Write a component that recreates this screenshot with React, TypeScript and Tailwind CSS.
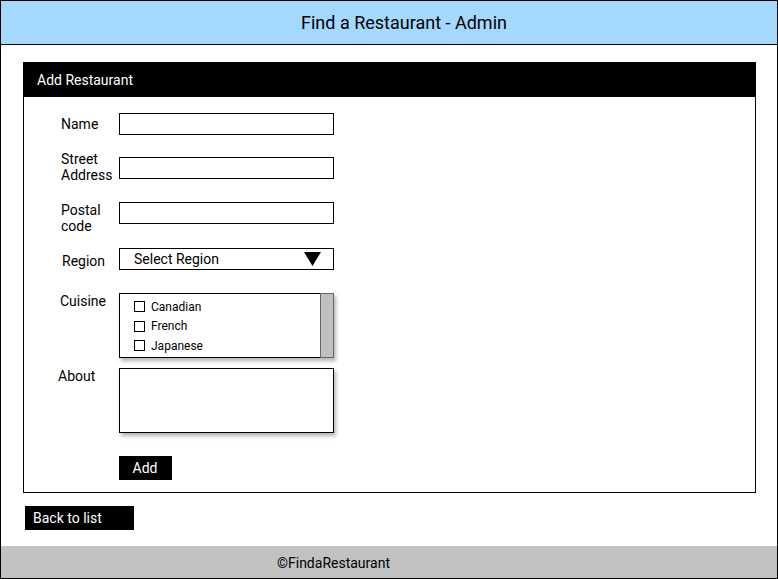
import React from "react";

function Label({ children, className = "" }: { children: React.ReactNode; className?: string }) {
  return <div className={"w-[58px] shrink-0 text-[14px] leading-[16px] text-black " + className}>{children}</div>;
}

export default function App() {
  const cuisines = ["Canadian", "French", "Japanese"];
  return (
    <div
      className="w-[778px] h-[579px] border border-black flex flex-col bg-white overflow-hidden"
      style={{ fontFamily: "Roboto, 'Liberation Sans', sans-serif" }}
    >
      <div className="h-[44px] shrink-0 bg-[#a4d8fd] border-b border-black flex items-center justify-center">
        <span className="text-[18px] leading-[22px] text-black pl-[30px]">Find a Restaurant - Admin</span>
      </div>

      <div className="mt-[17px] ml-[22px] w-[733px] h-[431px] border border-black flex flex-col">
        <div className="h-[34px] bg-black flex items-center pl-[13px]">
          <span className="text-white text-[14px] leading-[16px]">Add Restaurant</span>
        </div>
        <div className="flex flex-col pl-[37px] pt-[16px]">
          {/* Name */}
          <div className="flex items-start">
            <Label className="mt-[3px]">Name</Label>
            <div className="w-[215px] h-[22px] border border-black" />
          </div>
          {/* Street */}
          <div className="flex items-start mt-[16px]">
            <Label>
              Street
              <br />
              Address
            </Label>
            <div className="w-[215px] h-[22px] border border-black mt-[6px]" />
          </div>
          {/* Postal */}
          <div className="flex items-start mt-[19px]">
            <Label>
              Postal
              <br />
              code
            </Label>
            <div className="w-[215px] h-[22px] border border-black" />
          </div>
          {/* Region */}
          <div className="flex items-start mt-[14px]">
            <Label className="mt-[5px] pl-[1px]">Region</Label>
            <div className="w-[215px] h-[22px] border border-black flex items-center pl-[14px] pr-[12px] justify-between">
              <span className="text-[14px] leading-[16px]">Select Region</span>
              <svg width="17" height="14" viewBox="0 0 17 14">
                <polygon points="0,0 17,0 8.5,14" fill="black" />
              </svg>
            </div>
          </div>
          {/* Cuisine */}
          <div className="flex items-start mt-[23px]">
            <Label className="-ml-[1px] mr-[1px]">Cuisine</Label>
            <div className="w-[215px] h-[65px] border border-black flex shadow-[2px_3px_4px_rgba(0,0,0,0.3)]">
              <div className="flex-1 flex flex-col pl-[14px] pt-[3px]">
                {cuisines.map((c) => (
                  <div key={c} className="flex items-center h-[19.5px]">
                    <div className="w-[11px] h-[11px] border border-black" />
                    <span className="ml-[6px] text-[12px] leading-[14px]">{c}</span>
                  </div>
                ))}
              </div>
              <div className="w-[14px] -mt-[1px] -mb-[1px] -mr-[1px] bg-[#c0c0c0] border border-[#666]" />
            </div>
          </div>
          {/* About */}
          <div className="flex items-start mt-[10px]">
            <Label className="-ml-[3px] mr-[3px]">About</Label>
            <div className="w-[215px] h-[65px] border border-black shadow-[2px_3px_4px_rgba(0,0,0,0.3)]" />
          </div>
          {/* Add */}
          <div className="flex mt-[23px] pl-[58px]">
            <div className="w-[53px] h-[24px] bg-black text-white text-[14px] leading-[16px] flex items-center justify-center pr-[1px]">
              Add
            </div>
          </div>
        </div>
      </div>

      <div className="mt-[13px] ml-[24px] w-[109px] h-[24px] bg-black text-white text-[14px] leading-[16px] flex items-center pl-[8px]">
        Back to list
      </div>

      <div className="flex-1" />

      <div className="h-[32px] shrink-0 bg-[#c2c2c2] flex items-center pl-[276px] pt-[2px]">
        <span className="text-[14px] leading-[16px] text-black">©FindaRestaurant</span>
      </div>
    </div>
  );
}
